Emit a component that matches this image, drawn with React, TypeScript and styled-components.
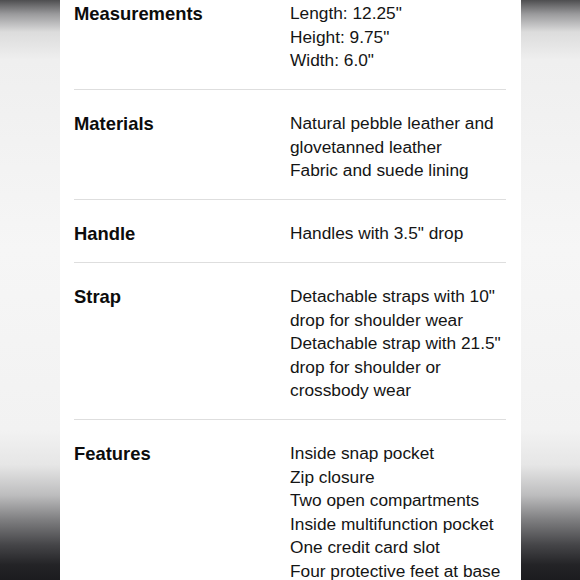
import React from "react";
import styled, { createGlobalStyle } from "styled-components";

const Global = createGlobalStyle`
  html, body {
    margin: 0;
    padding: 0;
    height: 580px;
    overflow: hidden;
  }
  body {
    background: linear-gradient(
      to bottom,
      #4e4e50 0px,
      #9a9a9c 14px,
      #dcdcdc 32px,
      #efefef 60px,
      #f6f6f6 250px,
      #f2f2f2 430px,
      #e6e6e6 465px,
      #bdbdbe 495px,
      #7e7e80 520px,
      #454548 545px,
      #232326 565px,
      #1c1c1f 580px
    );
    font-family: "Liberation Sans", Arial, Helvetica, sans-serif;
    color: #111;
  }
`;

const Panel = styled.main`
  width: 461px;
  height: 580px;
  margin: 0 0 0 60px;
  background: #ffffff;
  box-sizing: border-box;
  padding: 0 15px 0 14px;
  overflow: hidden;
`;

const SpecList = styled.dl`
  margin: 0;
  padding: 0;
`;

const SpecRow = styled.div`
  display: grid;
  grid-template-columns: 216px 1fr;
  align-items: start;
  padding: 22px 0 16.5px;
  border-bottom: 1px solid #dedede;

  &:first-child {
    padding-top: 2px;
  }
  &:last-child {
    border-bottom: none;
  }
`;

const Label = styled.dt`
  margin: 0;
  font-size: 18.4px;
  font-weight: 700;
  line-height: 23.5px;
  color: #0c0c0c;
`;

const Values = styled.dd`
  margin: 0;
  font-size: 17.3px;
  font-weight: 400;
  line-height: 23.5px;
  color: #151515;
`;

const Line = styled.div`
  white-space: nowrap;
`;

const specs: { label: string; lines: string[] }[] = [
  { label: "Measurements", lines: ['Length: 12.25"', 'Height: 9.75"', 'Width: 6.0"'] },
  {
    label: "Materials",
    lines: ["Natural pebble leather and", "glovetanned leather", "Fabric and suede lining"],
  },
  { label: "Handle", lines: ['Handles with 3.5" drop'] },
  {
    label: "Strap",
    lines: [
      'Detachable straps with 10"',
      "drop for shoulder wear",
      'Detachable strap with 21.5"',
      "drop for shoulder or",
      "crossbody wear",
    ],
  },
  {
    label: "Features",
    lines: [
      "Inside snap pocket",
      "Zip closure",
      "Two open compartments",
      "Inside multifunction pocket",
      "One credit card slot",
      "Four protective feet at base",
    ],
  },
];

export default function App() {
  return (
    <>
      <Global />
      <Panel>
        <SpecList>
          {specs.map((s) => (
            <SpecRow key={s.label}>
              <Label>{s.label}</Label>
              <Values>
                {s.lines.map((l) => (
                  <Line key={l}>{l}</Line>
                ))}
              </Values>
            </SpecRow>
          ))}
        </SpecList>
      </Panel>
    </>
  );
}
